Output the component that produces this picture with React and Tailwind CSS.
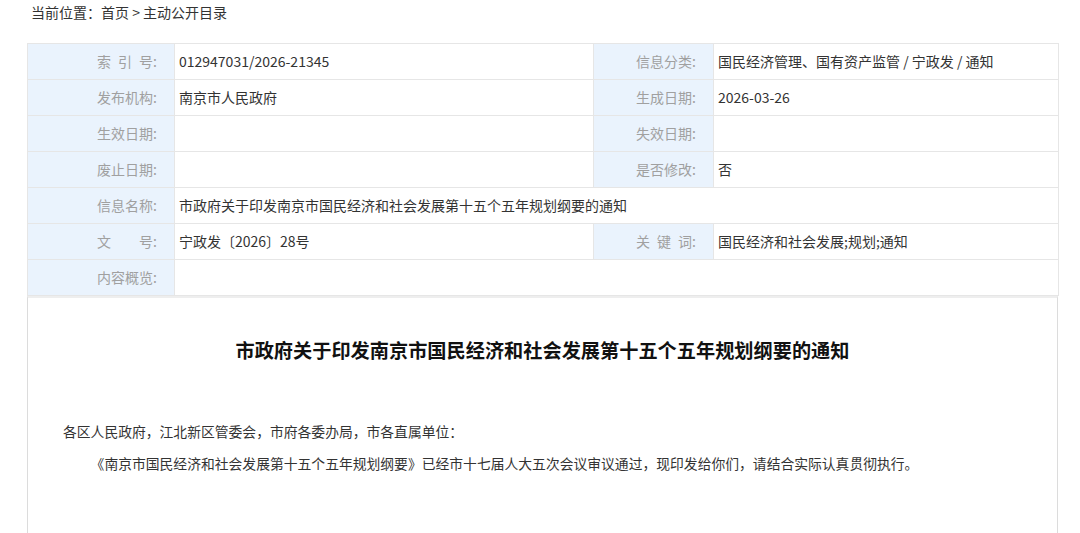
import React from "react";

const rows = [
  [
    { label: "索\u2002引\u2002号:", value: "012947031/2026-21345" },
    { label: "信息分类:", value: "国民经济管理、国有资产监管 / 宁政发 / 通知" },
  ],
  [
    { label: "发布机构:", value: "南京市人民政府" },
    { label: "生成日期:", value: "2026-03-26" },
  ],
  [
    { label: "生效日期:", value: "" },
    { label: "失效日期:", value: "" },
  ],
  [
    { label: "废止日期:", value: "" },
    { label: "是否修改:", value: "否" },
  ],
  [{ label: "信息名称:", value: "市政府关于印发南京市国民经济和社会发展第十五个五年规划纲要的通知" }],
  [
    { label: "文\u3000\u3000号:", value: "宁政发〔2026〕28号" },
    { label: "关\u2002键\u2002词:", value: "国民经济和社会发展;规划;通知" },
  ],
  [{ label: "内容概览:", value: "" }],
];

const labelCls =
  "h-9 bg-[#eaf3fd] border border-[#e6e6e6] text-right pr-[17px] text-[#a0a0a0] whitespace-pre font-normal";
const valueCls = "h-9 border border-[#e6e6e6] pl-[4px] text-[#333] text-left";

const App = () => {
  return (
    <div
      className="min-h-screen bg-white text-[14px] text-[#333]"
      style={{ fontFamily: '"Noto Sans CJK SC", "Noto Sans", sans-serif' }}
    >
      <div className="pl-[31px] pt-[2px] h-[43px] leading-[20px]">
        当前位置：首页 &gt; 主动公开目录
      </div>
      <div className="ml-[27px] w-[1031px]">
        <table className="w-full border-collapse table-fixed">
          <colgroup>
            <col className="w-[147px]" />
            <col className="w-[419px]" />
            <col className="w-[120px]" />
            <col className="w-[345px]" />
          </colgroup>
          <tbody>
            {rows.map((row, i) => (
              <tr key={i}>
                {row.length === 2 ? (
                  <>
                    <th className={labelCls}>{row[0].label}</th>
                    <td className={valueCls}>{row[0].value}</td>
                    <th className={labelCls}>{row[1].label}</th>
                    <td className={valueCls}>{row[1].value}</td>
                  </>
                ) : (
                  <>
                    <th className={labelCls}>{row[0].label}</th>
                    <td className={valueCls} colSpan={3}>
                      {row[0].value}
                    </td>
                  </>
                )}
              </tr>
            ))}
          </tbody>
        </table>
        {/* article body */}
        <div className="border-x border-[#dcdcdc] border-t-2 border-t-[#eeeeee] min-h-[260px]">
          <h1 className="pt-[38px] text-center text-[19.2px] font-bold text-[#111] leading-[28px]">
            市政府关于印发南京市国民经济和社会发展第十五个五年规划纲要的通知
          </h1>
          <div className="px-[35px] pt-[51px] text-[13.8px] leading-[32px] text-[#333]">
            <p>各区人民政府，江北新区管委会，市府各委办局，市各直属单位：</p>
            <p className="indent-[2em]">
              《南京市国民经济和社会发展第十五个五年规划纲要》已经市十七届人大五次会议审议通过，现印发给你们，请结合实际认真贯彻执行。
            </p>
          </div>
        </div>
      </div>
    </div>
  );
};

export default App;
